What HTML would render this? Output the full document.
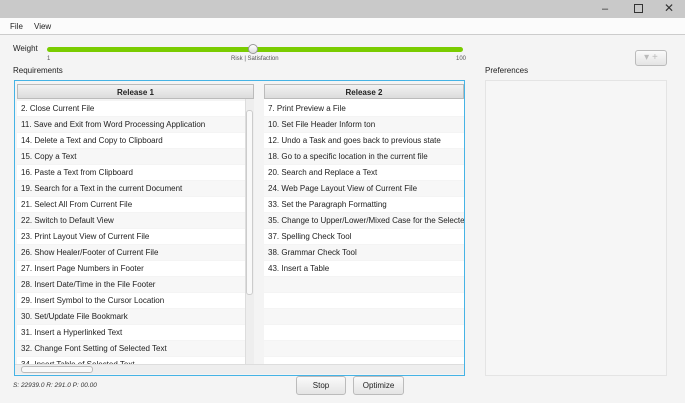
<!DOCTYPE html>
<html><head><style>
*{margin:0;padding:0;box-sizing:border-box}
body{width:685px;height:403px;background:#f4f4f4;font-family:"Liberation Sans",sans-serif;font-size:8px;color:#222;position:relative;overflow:hidden}
.a{position:absolute}
.row{height:16px;line-height:16px;padding-left:4px;white-space:nowrap;overflow:hidden;border-bottom:1px solid #f4f4f4}
.row:nth-child(odd){background:#fff}.row:nth-child(even){background:#f7f7f7}
.hdr{height:15px;line-height:15px;text-align:center;font-weight:bold;background:linear-gradient(#f2f2f2,#dcdcdc);border:1px solid #bbb}
.btn{background:linear-gradient(#fafafa,#e4e4e4);border:1px solid #bbb;border-radius:3px;text-align:center;line-height:17px}
.lst{padding-top:2px}
</style></head><body>
<div class="a" style="left:0;top:0;width:685px;height:18px;background:#c9c9c9"></div>
<div class="a" style="left:602px;top:3px;font-size:11px;color:#333">–</div>
<div class="a" style="left:634px;top:4px;width:9px;height:9px;border:1px solid #333"></div>
<div class="a" style="left:664px;top:1px;font-size:12px;color:#333">✕</div>
<div class="a" style="left:0;top:18px;width:685px;height:17px;background:#fbfbfb;border-bottom:1px solid #ccc"></div>
<div class="a" style="left:10px;top:22px">File</div>
<div class="a" style="left:34px;top:22px">View</div>
<div class="a" style="left:13px;top:44px">Weight</div>
<div class="a" style="left:47px;top:47px;width:416px;height:5px;border-radius:3px;background:#7acc00"></div>
<div class="a" style="left:248px;top:44px;width:10px;height:10px;border-radius:50%;background:linear-gradient(#fff,#ddd);border:1px solid #999"></div>
<div class="a" style="left:47px;top:56px;font-size:6px;color:#555">1</div>
<div class="a" style="left:231px;top:56px;font-size:6px;color:#555">Risk | Satisfaction</div>
<div class="a" style="left:456px;top:56px;font-size:6px;color:#555">100</div>
<div class="a" style="left:13px;top:66px">Requirements</div>
<div class="a" style="left:485px;top:66px">Preferences</div>
<div class="a btn" style="left:635px;top:50px;width:32px;height:16px;color:#bbb;font-size:10px;line-height:14px">▾ +</div>
<div class="a" style="left:485px;top:80px;width:182px;height:296px;background:#f6f6f6;border:1px solid #e4e4e4"></div>
<div class="a" style="left:14px;top:80px;width:451px;height:296px;border:1px solid #45b3e5;background:#f4f4f4"></div>
<div class="a" style="left:17px;top:84px;width:237px">
<div class="hdr">Release 1</div>
<div class="lst" style="width:228px;height:265px;overflow:hidden">
<div class="row">2. Close Current File</div><div class="row">11. Save and Exit from Word Processing Application</div><div class="row">14. Delete a Text and Copy to Clipboard</div><div class="row">15. Copy a Text</div><div class="row">16. Paste a Text from Clipboard</div><div class="row">19. Search for a Text in the current Document</div><div class="row">21. Select All From Current File</div><div class="row">22. Switch to Default View</div><div class="row">23. Print Layout View of Current File</div><div class="row">26. Show Healer/Footer of Current File</div><div class="row">27. Insert Page Numbers in Footer</div><div class="row">28. Insert Date/Time in the File Footer</div><div class="row">29. Insert Symbol to the Cursor Location</div><div class="row">30. Set/Update File Bookmark</div><div class="row">31. Insert a Hyperlinked Text</div><div class="row">32. Change Font Setting of Selected Text</div><div class="row">34. Insert Table of Selected Text</div>
</div></div>
<div class="a" style="left:245px;top:99px;width:9px;height:265px;background:#eee;border-left:1px solid #ddd"></div>
<div class="a" style="left:246px;top:110px;width:7px;height:185px;background:#f9f9f9;border:1px solid #ccc;border-radius:3px"></div>
<div class="a" style="left:264px;top:84px;width:200px">
<div class="hdr">Release 2</div>
<div class="lst" style="height:265px;overflow:hidden;background:#fff">
<div class="row">7. Print Preview a File</div><div class="row">10. Set File Header Inform ton</div><div class="row">12. Undo a Task and goes back to previous state</div><div class="row">18. Go to a specific location in the current file</div><div class="row">20. Search and Replace a Text</div><div class="row">24. Web Page Layout View of Current File</div><div class="row">33. Set the Paragraph Formatting</div><div class="row">35. Change to Upper/Lower/Mixed Case for the Selected</div><div class="row">37. Spelling Check Tool</div><div class="row">38. Grammar Check Tool</div><div class="row">43. Insert a Table</div><div class="row"></div><div class="row"></div><div class="row"></div><div class="row"></div><div class="row"></div><div class="row"></div>
</div></div>
<div class="a" style="left:15px;top:364px;width:449px;height:10px;background:#eee;border-top:1px solid #ddd"></div>
<div class="a" style="left:21px;top:366px;width:72px;height:7px;border:1px solid #bbb;border-radius:3px;background:#f9f9f9"></div>
<div class="a" style="left:13px;top:382px;font-size:6.5px;font-style:italic;color:#333">S: 22939.0 R: 291.0 P: 00.00</div>
<div class="a btn" style="left:296px;top:376px;width:50px;height:19px">Stop</div>
<div class="a btn" style="left:353px;top:376px;width:51px;height:19px">Optimize</div>
</body></html>
